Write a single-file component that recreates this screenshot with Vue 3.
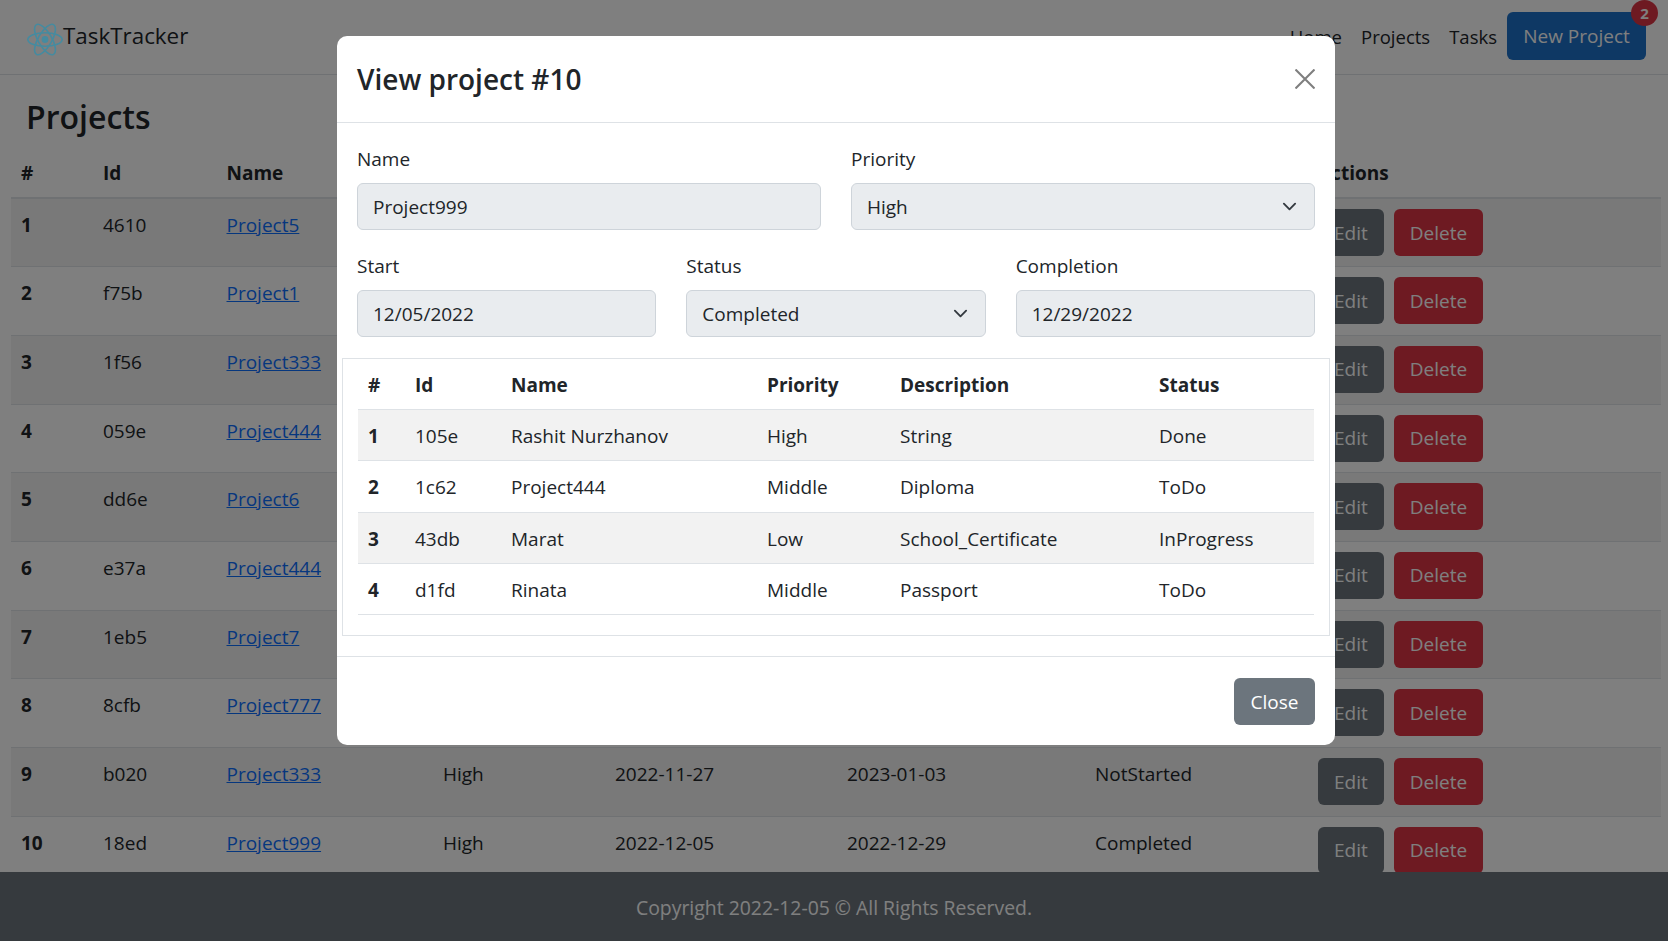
<script setup>
const projects = [
  { id: '4610', name: 'Project5' },
  { id: 'f75b', name: 'Project1' },
  { id: '1f56', name: 'Project333' },
  { id: '059e', name: 'Project444' },
  { id: 'dd6e', name: 'Project6' },
  { id: 'e37a', name: 'Project444' },
  { id: '1eb5', name: 'Project7' },
  { id: '8cfb', name: 'Project777' },
  { id: 'b020', name: 'Project333', priority: 'High', start: '2022-11-27', end: '2023-01-03', status: 'NotStarted' },
  { id: '18ed', name: 'Project999', priority: 'High', start: '2022-12-05', end: '2022-12-29', status: 'Completed' }
]

const tasks = [
  { id: '105e', name: 'Rashit Nurzhanov', priority: 'High', description: 'String', status: 'Done' },
  { id: '1c62', name: 'Project444', priority: 'Middle', description: 'Diploma', status: 'ToDo' },
  { id: '43db', name: 'Marat', priority: 'Low', description: 'School_Certificate', status: 'InProgress' },
  { id: 'd1fd', name: 'Rinata', priority: 'Middle', description: 'Passport', status: 'ToDo' }
]
</script>

<template>
  <div class="page">
    <nav class="navbar">
      <a class="brand">
        <svg class="logo" viewBox="-18 -16.5 36 33" fill="none" stroke="#458ba0" stroke-width="1.6">
          <circle r="3.4" fill="#458ba0" stroke="none" />
          <ellipse rx="17.2" ry="6.8" />
          <ellipse rx="17.2" ry="6.8" transform="rotate(60)" />
          <ellipse rx="17.2" ry="6.8" transform="rotate(120)" />
        </svg>
        <span class="brand-name">TaskTracker</span>
      </a>
      <div class="nav-links">
        <a>Home</a>
        <a>Projects</a>
        <a>Tasks</a>
        <button class="btn btn-primary new-project">
          New Project
          <span class="badge">2</span>
        </button>
      </div>
    </nav>

    <main class="content">
      <h1>Projects</h1>
      <table class="projects">
        <colgroup>
          <col class="p1" /><col class="p2" /><col class="p3" /><col class="p4" />
          <col class="p5" /><col class="p6" /><col class="p7" /><col class="p8" />
        </colgroup>
        <thead>
          <tr>
            <th>#</th><th>Id</th><th>Name</th><th>Priority</th>
            <th>Start</th><th>Completion</th><th>Status</th><th>Actions</th>
          </tr>
        </thead>
        <tbody>
          <tr v-for="(p, i) in projects" :key="p.id">
            <th>{{ i + 1 }}</th>
            <td>{{ p.id }}</td>
            <td><a class="link">{{ p.name }}</a></td>
            <td>{{ p.priority }}</td>
            <td>{{ p.start }}</td>
            <td>{{ p.end }}</td>
            <td>{{ p.status }}</td>
            <td class="actions">
              <button class="btn btn-secondary">Edit</button>
              <button class="btn btn-danger">Delete</button>
            </td>
          </tr>
        </tbody>
      </table>
    </main>

    <footer class="footer">Copyright 2022-12-05 © All Rights Reserved.</footer>

    <div class="backdrop"></div>

    <div class="modal">
      <header class="modal-header">
        <h5>View project #10</h5>
        <svg class="close" viewBox="0 0 20 20" stroke="#7f7f7f" stroke-width="2.1">
          <path d="M0.5 0.5 L19.5 19.5 M19.5 0.5 L0.5 19.5" />
        </svg>
      </header>

      <div class="modal-body">
        <div class="form-row two">
          <div class="field">
            <label>Name</label>
            <div class="control">Project999</div>
          </div>
          <div class="field">
            <label>Priority</label>
            <div class="control select">
              High
              <svg class="chevron" viewBox="0 0 16 16" fill="none" stroke="#343a40" stroke-width="2" stroke-linecap="round" stroke-linejoin="round">
                <path d="m2 5 6 6 6-6" />
              </svg>
            </div>
          </div>
        </div>
        <div class="form-row three">
          <div class="field">
            <label>Start</label>
            <div class="control">12/05/2022</div>
          </div>
          <div class="field">
            <label>Status</label>
            <div class="control select">
              Completed
              <svg class="chevron" viewBox="0 0 16 16" fill="none" stroke="#343a40" stroke-width="2" stroke-linecap="round" stroke-linejoin="round">
                <path d="m2 5 6 6 6-6" />
              </svg>
            </div>
          </div>
          <div class="field">
            <label>Completion</label>
            <div class="control">12/29/2022</div>
          </div>
        </div>

        <div class="table-box">
          <table class="tasks">
            <colgroup>
              <col class="t1" /><col class="t2" /><col class="t3" />
              <col class="t4" /><col class="t5" /><col class="t6" />
            </colgroup>
            <thead>
              <tr>
                <th>#</th><th>Id</th><th>Name</th><th>Priority</th><th>Description</th><th>Status</th>
              </tr>
            </thead>
            <tbody>
              <tr v-for="(t, i) in tasks" :key="t.id">
                <th>{{ i + 1 }}</th>
                <td>{{ t.id }}</td>
                <td>{{ t.name }}</td>
                <td>{{ t.priority }}</td>
                <td>{{ t.description }}</td>
                <td>{{ t.status }}</td>
              </tr>
            </tbody>
          </table>
        </div>
      </div>

      <footer class="modal-footer">
        <button class="btn btn-secondary">Close</button>
      </footer>
    </div>
  </div>
</template>

<style>
body {
  margin: 0;
  overflow: hidden;
}
</style>

<style scoped>
.page {
  position: relative;
  height: 941px;
  overflow: hidden;
  background: #fff;
  color: #212529;
  font-family: "Open Sans", "Noto Sans", sans-serif;
  font-size: 19px;
  line-height: 30px;
}

.navbar {
  display: flex;
  justify-content: space-between;
  align-items: center;
  height: 75px;
  box-sizing: border-box;
  padding: 0 22px 0 27px;
  border-bottom: 1px solid #dee2e6;
}

.brand {
  display: flex;
  align-items: center;
  font-size: 22.4px;
}

.brand-name {
  margin-bottom: 3px;
}

.logo {
  position: relative;
  z-index: 1;
  width: 36px;
  height: 33px;
  margin-top: 4px;
}

.nav-links {
  display: flex;
  align-items: center;
  gap: 19px;
  font-size: 18.5px;
}

.btn {
  border: 0;
  border-radius: 6px;
  height: 47px;
  padding: 0 16px;
  color: #fff;
  font: inherit;
  font-size: 19px;
}

.btn-primary {
  background: #1c70c8;
}

.btn-secondary {
  background: #6c757d;
}

.btn-danger {
  background: #dc3545;
}

.new-project {
  position: relative;
  margin: 0 0 2px -9px;
  width: 139px;
  height: 48px;
}

.badge {
  position: absolute;
  top: -12px;
  right: -12px;
  width: 27px;
  height: 26px;
  border-radius: 50%;
  background: #dc3545;
  font-size: 15px;
  font-weight: 700;
  line-height: 26px;
}

.content {
  padding: 0 7px 0 11px;
}

h1 {
  margin: 0;
  padding: 17px 0 0 15px;
  height: 75px;
  box-sizing: border-box;
  font-size: 32px;
  font-weight: 600;
  line-height: 50px;
}

table {
  width: 100%;
  border-collapse: collapse;
  table-layout: fixed;
}

th,
td {
  padding: 10px;
  text-align: left;
  vertical-align: top;
  font-weight: 400;
}

th {
  font-weight: 700;
}

.projects thead th {
  height: 48px;
  padding: 8px 10px;
  box-sizing: border-box;
  border-bottom: 2px solid #dee2e6;
}

.projects tbody tr {
  height: 68.7px;
  border-bottom: 1px solid #dee2e6;
}

.projects tbody tr:nth-child(odd) {
  background: #f2f2f2;
}

.projects tbody th,
.projects tbody td {
  padding-top: 11px;
}

.projects td.actions {
  padding-top: 10px;
  padding-bottom: 0;
}

.actions .btn {
  margin-right: 10px;
}

.p1 { width: 82px; }
.p2 { width: 123.5px; }
.p3 { width: 216.5px; }
.p4 { width: 172px; }
.p5 { width: 232px; }
.p6 { width: 248px; }
.p7 { width: 223px; }

.link {
  color: #0d6efd;
  text-decoration: underline;
}

.footer {
  position: absolute;
  left: 0;
  right: 0;
  bottom: 0;
  height: 69px;
  background: #6c757d;
  color: #fff;
  text-align: center;
  font-size: 19.4px;
  line-height: 72px;
}

.backdrop {
  position: absolute;
  inset: 0;
  background: rgba(0, 0, 0, 0.5);
}

.modal {
  position: absolute;
  top: 36px;
  left: 337px;
  width: 998px;
  height: 709px;
  border-radius: 10px;
  background: #fff;
  display: flex;
  flex-direction: column;
}

.modal-header {
  display: flex;
  justify-content: space-between;
  align-items: center;
  height: 87px;
  box-sizing: border-box;
  padding: 0 20px;
  border-bottom: 1px solid #dee2e6;
}

h5 {
  margin: 0;
  font-size: 28px;
  font-weight: 600;
}

.close {
  width: 20px;
  height: 20px;
}

.modal-body {
  flex: 1;
  padding: 20px 20px 0;
}

.form-row {
  display: grid;
  gap: 30px;
  margin-bottom: 20px;
}

.two {
  grid-template-columns: 1fr 1fr;
}

.three {
  grid-template-columns: 1fr 1fr 1fr;
}

label {
  display: block;
  color: #212529;
  line-height: 32px;
  margin-bottom: 8px;
}

.control {
  position: relative;
  height: 47px;
  box-sizing: border-box;
  padding: 0 15px;
  border: 1px solid #ced4da;
  border-radius: 6px;
  background: #e9ecef;
  line-height: 47px;
  color: #212529;
}

.chevron {
  position: absolute;
  top: 15px;
  right: 17px;
  width: 15px;
  height: 15px;
}

.table-box {
  margin: 21px -15px 0;
  padding: 0 15px 20px;
  border: 1px solid #dee2e6;
}

.t1 { width: 47px; }
.t2 { width: 96px; }
.t3 { width: 256px; }
.t4 { width: 133px; }
.t5 { width: 259px; }

.tasks th,
.tasks td {
  padding: 11px 10px 9px;
}

.tasks tr {
  height: 51.25px;
  border-bottom: 1px solid #dee2e6;
}

.tasks thead tr {
  height: 50.25px;
}

.tasks tbody tr:nth-child(odd) {
  background: #f2f2f2;
}

.modal-footer {
  display: flex;
  justify-content: flex-end;
  padding: 21px 20px 20px;
  border-top: 1px solid #dee2e6;
}

.modal-footer .btn {
  width: 81px;
  padding: 0;
}
</style>
